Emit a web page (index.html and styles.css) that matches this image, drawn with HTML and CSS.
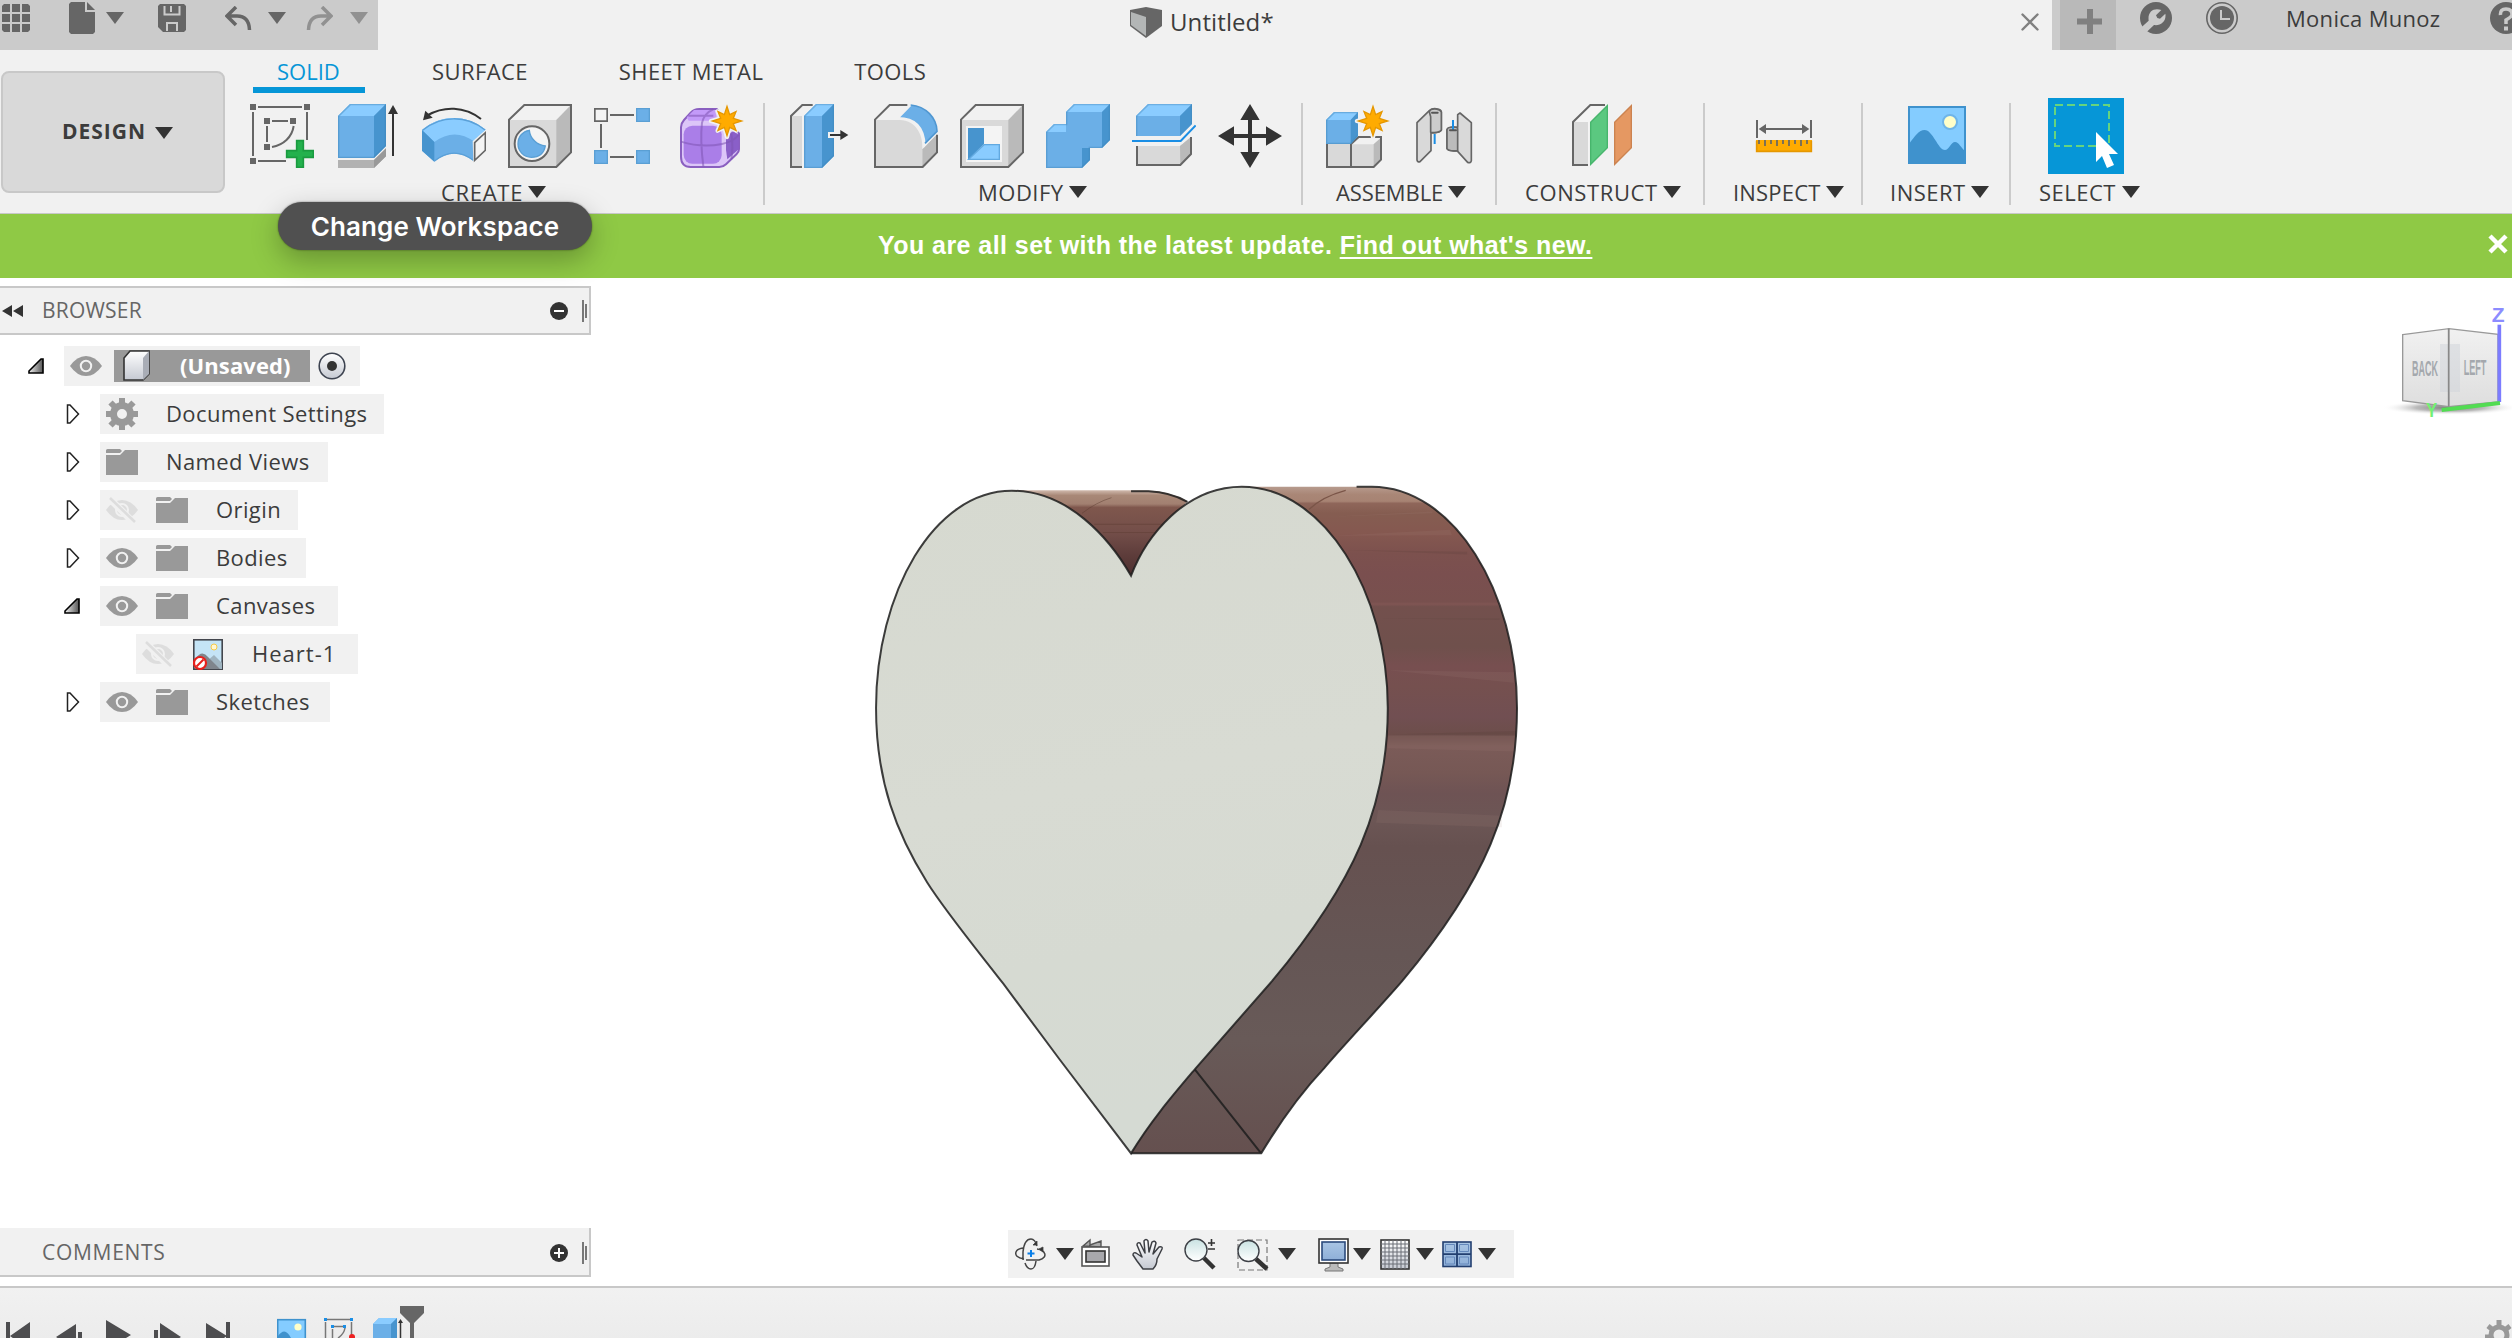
FILE: index.html
```html
<!DOCTYPE html>
<html lang="en">
<head>
<meta charset="utf-8">
<title>Untitled*</title>
<link rel="stylesheet" href="styles.css">
</head>
<body>
<svg class="defs" aria-hidden="true">
  <defs>
    <symbol id="caret" viewBox="0 0 18 12"><path d="M0 0H18L9 12Z" fill="currentColor"/></symbol>
    <symbol id="star" viewBox="-56 -56 112 112">
      <g id="starshape"><path d="M0-48L8-19L28-29L19-8L48 0L19 8L28 29L8 19L0 48L-8 19L-28 29L-19 8L-48 0L-19-8L-28-29L-8-19Z" fill="#ffab00" stroke="#f1f1f1" stroke-width="13" stroke-linejoin="round"/><path d="M0-44L8-19L27-28L19-8L44 0L19 8L27 28L8 19L0 44L-8 19L-27 28L-19 8L-44 0L-19-8L-27-28L-8-19Z" fill="#ffab00" stroke="#e59700" stroke-width="4"/></g>
    </symbol>
    <symbol id="eye" viewBox="0 0 32 20"><path d="M0 10Q7 0 16 0T32 10Q25 20 16 20T0 10Z" fill="#999"/><circle cx="16" cy="10" r="5.2" fill="#999" stroke="#f1f1f1" stroke-width="2"/></symbol>
    <symbol id="eyeoff" viewBox="0 0 32 26"><path d="M0 13Q7 3 16 3T32 13Q25 23 16 23T0 13Z" fill="#ddd"/><circle cx="16" cy="13" r="6" fill="#ddd" stroke="#f1f1f1" stroke-width="2"/><path d="M3 1L28 26" stroke="#f1f1f1" stroke-width="7"/><path d="M4 1L29 25" stroke="#ddd" stroke-width="2.6"/></symbol>
    <symbol id="folder" viewBox="0 0 32 26"><path d="M0 1.500Q0 0 1.500 0H14L16 2L14 4H0ZM0 6H14L19 1H32V26H0Z" fill="#999"/></symbol>
    <symbol id="closed" viewBox="0 0 14 20"><path d="M1.500 1H4L12.500 10L4 19H1.500Z" fill="#fff" stroke="#222" stroke-width="1.500"/></symbol>
    <symbol id="open" viewBox="0 0 16 16"><path d="M1 15V13L13 1H15V15Z" fill="url(#openfill)" stroke="#000" stroke-width="1.600"/></symbol>
    <linearGradient id="openfill"><stop offset="0" stop-color="#eee"/><stop offset="1" stop-color="#555"/></linearGradient>
    <linearGradient id="metal" x2="0" y2="1"><stop offset="0" stop-color="#fff"/><stop offset="1" stop-color="#c5c9d2"/></linearGradient>
    <linearGradient id="lens" x2="0" y2="1"><stop offset="0" stop-color="#c9e2e2"/><stop offset="1" stop-color="#fff"/></linearGradient>
    <linearGradient id="screen" x2="0" y2="1"><stop offset="0" stop-color="#a9c5e4"/><stop offset="1" stop-color="#8eafd8"/></linearGradient>
  </defs>
</svg>
<div class="app">
  <header class="titlebar">
    <div class="quick">
      <svg class="q-grid" viewBox="0 0 28 28" fill="#666"><path d="M2 0H8V8H0V2ZM10 0H18V8H10ZM20 0H26L28 2V8H20ZM0 10H8V18H0ZM10 10H18V18H10ZM20 10H28V18H20ZM0 20H8V28H2L0 26ZM10 20H18V28H10ZM20 20H28V26L26 28H20Z"/></svg>
      <svg class="q-file" viewBox="0 0 26 32" fill="#666"><path d="M2 0H16V10H26V30L24 32H2L0 30V2ZM18 0L26 8H18Z"/></svg>
      <svg class="caret q-c1"><use href="#caret"/></svg>
      <svg class="q-save" viewBox="0 0 28 28"><path d="M2 0H26L28 2V26L26 28H5L0 23V2Z" fill="#666"/><path d="M6.500 2V10.500H21.500V2M9 27V19H19V27" fill="none" stroke="#cbcbcb" stroke-width="2"/><path d="M13 2V8" stroke="#cbcbcb" stroke-width="2"/></svg>
      <svg class="q-undo" viewBox="0 0 27 24" fill="none" stroke="#666" stroke-width="3.500"><path d="M11 1L2 10L11 19M2 10H12Q24 10 24.500 24"/></svg>
      <svg class="caret q-c2"><use href="#caret"/></svg>
      <svg class="q-redo" viewBox="0 0 27 24" fill="none" stroke="#919191" stroke-width="3.500"><path d="M16 1L25 10L16 19M25 10H15Q3 10 2.500 24"/></svg>
      <svg class="caret q-c3"><use href="#caret"/></svg>
    </div>
    <div class="doctab">
      <svg class="doc-icon" viewBox="0 0 32 31"><path d="M0 3L16 0L32 3V19L16 31L0 19Z" fill="#666"/><path d="M1 5L16 10V29L1 18Z" fill="#b3b6b6"/></svg>
      <span class="doc-name">Untitled*</span>
      <svg class="doc-close" viewBox="0 0 18 18"><path d="M1.500 1.500L16.500 16.500M16.500 1.500L1.500 16.500" stroke="#808080" stroke-width="2.400" stroke-linecap="round"/></svg>
    </div>
    <div class="account">
      <div class="newtab"><svg width="25" height="25" viewBox="0 0 25 25"><path d="M0 12.500H25M13 0V25" stroke="#808080" stroke-width="6"/></svg></div>
      <svg class="a-wrench" viewBox="420 6 96 96"><circle cx="468" cy="54" r="48" fill="#666"/><path d="M416 98L426 80L446 62C442 34 462 22 484 30L468 46L472 54L480 56L496 41C500 64 482 78 462 75L440 96L428 112Z" fill="#cbcbcb"/></svg>
      <svg class="a-clock" viewBox="0 0 32 32"><circle cx="16" cy="16" r="15.200" fill="none" stroke="#666" stroke-width="1.600"/><circle cx="16" cy="16" r="12" fill="#666"/><path d="M15 8V17H24" fill="none" stroke="#cbcbcb" stroke-width="2"/></svg>
      <span class="user">Monica Munoz</span>
      <svg class="a-help" viewBox="0 0 32 32"><circle cx="16" cy="16" r="16" fill="#666"/><path d="M10.500 13Q10 7 16 7T22 12.500Q21.500 15 16 18V22" fill="none" stroke="#cbcbcb" stroke-width="3.500"/><path d="M14 24.500H18V28.500H14Z" fill="#cbcbcb"/></svg>
    </div>
  </header>

  <section class="ribbon">
    <button class="workspace">DESIGN<svg class="caret"><use href="#caret"/></svg></button>
    <div class="tools">
      <nav class="tabs">
        <a class="tab active">SOLID</a><a class="tab">SURFACE</a><a class="tab">SHEET METAL</a><a class="tab">TOOLS</a>
      </nav>
      <div class="groups">
        <div class="group g-create">
          <div class="icons">
            <svg viewBox="30 42 192 192"><path d="M54 51H186M39 66V198M54 213H138M201 66V150M96 93H144M81 108V156M96 171C130 165 156 142 161 108" fill="none" stroke="#666" stroke-width="6"/><path d="M30 42h18v18H30zM192 42h18v18h-18zM72 84h18v18H72zM150 84h18v18h-18zM72 162h18v18H72zM30 204h18v18H30z" fill="#666"/><path d="M170 152H190V182H220V202H190V232H170V202H140V182H170Z" fill="#23b14d" stroke="#1a9b40" stroke-width="5"/></svg>
            <svg viewBox="288 42 192 192"><path d="M294 210H402L438 175V199L402 234H294Z" fill="#b2b2b2"/><path d="M402 210L438 175V199L402 234Z" fill="#999"/><path d="M294 78L330 42H438V168L402 204H294Z" fill="#6bafe7"/><path d="M294 78L330 42H438L402 78Z" fill="#8accff"/><path d="M402 78L438 42V168L402 204Z" fill="#4794ce"/><path d="M296 79L331 44H436V167L401 202H296Z" fill="none" stroke="#3f84b9" stroke-opacity=".45" stroke-width="4"/><path d="M459 60V198" stroke="#333" stroke-width="6"/><path d="M459 45L474 72H444Z" fill="#333"/></svg>
            <svg viewBox="546 42 192 192"><path d="M546 120C602 72 680 72 738 120L702 156V214C662 184 622 184 583 215L546 182Z" fill="#6bafe7"/><path d="M546 120C602 72 680 72 738 120L702 154C664 126 622 126 583 156Z" fill="#8accff"/><path d="M546 120L583 156V215L546 182Z" fill="#4794ce"/><path d="M548 121C602 75 680 75 735 120M583 213C622 182 662 182 700 211" fill="none" stroke="#5aa0d8" stroke-width="4"/><path d="M698 154L740 117V184L700 217Z" fill="#f1f1f1"/><path d="M704 158L736 128V181L704 211Z" fill="#f4f4f4" stroke="#666" stroke-width="5"/><path d="M562 76C612 48 672 48 723 87" fill="none" stroke="#333" stroke-width="6"/><path d="M549 91L556 62L578 83Z" fill="#333"/></svg>
            <svg viewBox="804 42 192 192"><path d="M807 89L853 45H993V187L949 231H807Z" fill="#d9d9d9"/><path d="M807 89L853 45H993L949 90H807Z" fill="#f1f1f1"/><path d="M949 90L993 45V187L949 231Z" fill="#bababa"/><path d="M807 89L853 45H993V187L949 231H807Z" fill="none" stroke="#666" stroke-width="6"/><circle cx="876" cy="161" r="52" fill="#f4f4f4" stroke="#666" stroke-width="6"/><path d="M868 121C870 146 892 166 916 168C912 190 896 202 874 202C850 202 834 182 834 162C834 140 848 124 868 121Z" fill="#6bafe7" stroke="#5a9fd4" stroke-width="4"/></svg>
            <svg viewBox="1062 42 192 192"><path d="M1110 75H1182M1083 102V174M1110 201H1182" stroke="#666" stroke-width="6"/><path d="M1064.500 56.500h37v37h-37z" fill="#f4f4f4" stroke="#666" stroke-width="5"/><path d="M1190 56h38v38h-38zM1064 182h38v38h-38zM1190 182h38v38h-38z" fill="#6bafe7" stroke="#5a9fd4" stroke-width="4"/></svg>
            <svg viewBox="1320 42 192 192"><path d="M1323 112Q1323 100 1332 90L1352 68Q1362 57 1378 57H1430L1497 130V178Q1497 186 1490 192L1458 223Q1450 231 1438 231H1352Q1323 230 1323 200Z" fill="#dcc6f8" stroke="#8a5fc0" stroke-width="6"/><path d="M1340 82L1362 60H1425L1432 92H1346Z" fill="#c39af9"/><rect x="1331" y="107" width="114" height="114" rx="26" fill="#aa7ee8"/><path d="M1458 150Q1460 132 1480 124L1496 134V178L1462 208Q1456 180 1458 150Z" fill="#8a5fc8"/><path d="M1323 155Q1385 174 1446 162Q1480 155 1496 135M1390 229Q1380 150 1386 98Q1394 68 1420 58M1345 77H1420M1474 208Q1480 170 1474 130" fill="none" stroke="#7d54b3" stroke-opacity=".55" stroke-width="6"/><use href="#starshape" transform="translate(1461 93)"/></svg>
          </div>
          <div class="label">CREATE<svg class="caret"><use href="#caret"/></svg></div>
        </div>
        <div class="group g-modify">
          <div class="icons">
            <svg viewBox="54 42 192 192"><path d="M63 78L97 45H132L100 80V231H63Z" fill="#f1f1f1"/><path d="M66 78H96V228H66Z" fill="#d9d9d9"/><path d="M128 45H97L63 78V231H96" fill="none" stroke="#666" stroke-width="6"/><path d="M102 78L138 42H192V198L156 234H102Z" fill="#6bafe7"/><path d="M102 78L138 42H192L156 78Z" fill="#8accff"/><path d="M156 78L192 42V198L156 234Z" fill="#4794ce"/><path d="M104 79L139 44H190V197L155 232H104Z" fill="none" stroke="#3f84b9" stroke-opacity=".4" stroke-width="4"/><path d="M174 126H206V144H174Z" fill="#f1f1f1"/><path d="M180 132H211V120L235 135L211 150V138H180Z" fill="#333"/></svg>
            <svg viewBox="312 42 192 192"><path d="M315 89L359 45H420L500 130V187L458 231H315Z" fill="#f1f1f1"/><path d="M315 90H390C435 92 460 130 457 178V231H315Z" fill="#d9d9d9"/><path d="M457 178L501 133V187L457 231Z" fill="#bababa"/><path d="M412 45H359L315 89V231H458L501 187V134" fill="none" stroke="#666" stroke-width="6"/><path d="M384 84L424 43C470 47 502 84 503 124L464 166C462 116 438 84 384 84Z" fill="#6bafe7" stroke="#f1f1f1" stroke-width="6"/><path d="M422 45C468 49 500 84 501 124L465 160" fill="none" stroke="#4f97d2" stroke-width="5"/></svg>
            <svg viewBox="570 42 192 192"><path d="M573 89L617 45H759V187L715 231H573Z" fill="#d9d9d9"/><path d="M573 89L617 45H759L715 90H573Z" fill="#f1f1f1"/><path d="M715 90L759 45V187L715 231Z" fill="#bababa"/><path d="M573 89L617 45H759V187L715 231H573Z" fill="none" stroke="#666" stroke-width="6"/><path d="M588 108H696V216H588Z" fill="#f4f4f4"/><path d="M594 114H642V162L594 210Z" fill="#4794ce"/><path d="M596 208L642 164H688V208Z" fill="#8accff" stroke="#62a9e0" stroke-width="4"/></svg>
            <svg viewBox="828 42 192 192"><path d="M888 66L912 42H1020V150L996 174H960V210L936 234H828V126L852 102H888Z" fill="#6bafe7"/><path d="M888 66L912 42H1020L996 66ZM828 126L852 102H888V126Z" fill="#8accff"/><path d="M996 66L1020 42V150L996 174ZM936 174H960V210L936 234Z" fill="#4794ce"/><path d="M890 67L913 44H1018V149L995 172H958V209L935 232H830V127L853 104H890Z" fill="none" stroke="#3f84b9" stroke-opacity=".4" stroke-width="4"/></svg>
            <svg viewBox="1086 42 192 192"><path d="M1101 168H1230L1263 141V192L1231 225H1101Z" fill="#d9d9d9"/><path d="M1230 168L1263 141V192L1231 225Z" fill="#bababa"/><path d="M1101 168V225H1231L1263 192V141" fill="none" stroke="#666" stroke-width="6"/><path d="M1098 78L1134 42H1266V102L1230 138H1098Z" fill="#6bafe7"/><path d="M1098 78L1134 42H1266L1230 78Z" fill="#8accff"/><path d="M1230 78L1266 42V102L1230 138Z" fill="#4794ce"/><path d="M1100 138V79L1135 44H1264V102" fill="none" stroke="#3f84b9" stroke-opacity=".4" stroke-width="4"/><path d="M1086 153H1232L1277 106" fill="none" stroke="#f1f1f1" stroke-width="18"/><path d="M1086 153H1232L1277 106" fill="none" stroke="#1a8ee5" stroke-width="6"/></svg>
            <svg viewBox="1344 42 192 192"><path d="M1440 42L1469 90H1446V132H1488V109L1536 138L1488 167V144H1446V186H1469L1440 234L1411 186H1434V144H1392V167L1344 138L1392 109V132H1434V90H1411Z" fill="#333"/></svg>
          </div>
          <div class="label">MODIFY<svg class="caret"><use href="#caret"/></svg></div>
        </div>
        <div class="group g-assemble">
          <div class="icons">
            <svg viewBox="78 42 192 192"><path d="M81 160H153L178 141H243V209L221 231H81Z" fill="#d9d9d9"/><path d="M156 163L178 143H243L221 163Z" fill="#f1f1f1"/><path d="M221 163L243 143V209L221 231Z" fill="#bababa"/><path d="M81 160V231H221L243 209V141H176L153 162V231" fill="none" stroke="#666" stroke-width="6"/><path d="M78 90L102 66H174V138L152 162H78Z" fill="#6bafe7"/><path d="M78 90L102 66H174L152 90Z" fill="#8accff"/><path d="M152 90L174 66V138L152 162Z" fill="#4794ce"/><path d="M80 91L103 68H172M80 90V160H152L172 138" fill="none" stroke="#3f84b9" stroke-opacity=".45" stroke-width="4"/><use href="#starshape" transform="translate(219 93)"/></svg>
            <svg viewBox="336 42 192 192"><g stroke="#666" stroke-width="5" stroke-linejoin="round"><path d="M351 98L388 62Q394 56 404 56Q424 57 424 66V120Q420 129 393 129V182L360 215Q353 218 351 210Z" fill="#d9d9d9"/><path d="M388 66Q390 57 404 57T424 66V120Q418 130 392 127V80Z" fill="#ccc"/><path d="M514 98L480 69L473 74V112Q450 108 441 120V176Q446 184 471 182L503 217Q513 220 514 212Z" fill="#d9d9d9"/><path d="M441 118Q444 111 458 111T473 116V182Q446 185 441 176Z" fill="#bbb"/></g><path d="M404 132V162M459 90V122" stroke="#1a8ee5" stroke-width="6"/><path d="M396 68H413M450 121H468" stroke="#555" stroke-width="6" stroke-linecap="round"/></svg>
          </div>
          <div class="label">ASSEMBLE<svg class="caret"><use href="#caret"/></svg></div>
        </div>
        <div class="group g-construct">
          <div class="icons">
            <svg viewBox="810 42 192 192"><path d="M819 96L871 45H915L868 96V225H819Z" fill="#f4f4f4"/><path d="M822 96H864V222H822Z" fill="#d9d9d9"/><path d="M915 45H871L819 96V225H864" fill="none" stroke="#666" stroke-width="6"/><path d="M872 97L922 47V173L872 223Z" fill="#5bc880" stroke="#47b56c" stroke-width="4"/><path d="M944 97L994 47V173L944 223Z" fill="#e59862" stroke="#cc8350" stroke-width="4"/></svg>
          </div>
          <div class="label">CONSTRUCT<svg class="caret"><use href="#caret"/></svg></div>
        </div>
        <div class="group g-inspect">
          <div class="icons">
            <svg viewBox="1356 42 192 192"><path d="M1371 90V144M1533 90V144M1390 117H1514" stroke="#666" stroke-width="6"/><path d="M1376 117L1398 102V132ZM1528 117L1506 102V132Z" fill="#666"/><path d="M1368 150H1536V186H1368Z" fill="#ffab00"/><path d="M1370 152V184H1534V152" fill="none" stroke="#e59700" stroke-width="5"/><path d="M1377 150v12M1395 150v18M1413 150v12M1431 150v18M1449 150v12M1467 150v18M1485 150v12M1503 150v18M1521 150v12" stroke="#666" stroke-width="5"/></svg>
          </div>
          <div class="label">INSPECT<svg class="caret"><use href="#caret"/></svg></div>
        </div>
        <div class="group g-insert">
          <div class="icons">
            <svg viewBox="0 0 64 64"><rect x="3" y="2" width="58" height="58" fill="#84ccff"/><path d="M4 40C10 32 14 26 19.500 26C28 26 33 46 40 46C44 46 46 38 50 38C54 38 56 44 60 47V60H4Z" fill="#3f92cd"/><path d="M4 3H60V59H4Z" fill="none" stroke="#3f92cd" stroke-width="2"/><circle cx="45" cy="18" r="7" fill="#ffffc9" stroke="#6fb5e8" stroke-width="2"/></svg>
          </div>
          <div class="label">INSERT<svg class="caret"><use href="#caret"/></svg></div>
        </div>
        <div class="group g-select">
          <div class="icons">
            <svg class="selected" viewBox="0 0 76 76"><rect x="7" y="7" width="54" height="41" fill="none" stroke="#66d47e" stroke-width="2" stroke-dasharray="8 4"/><path d="M48 34L70 56H61L66 67L59 70L54 58L48 64Z" fill="#fff"/></svg>
          </div>
          <div class="label">SELECT<svg class="caret"><use href="#caret"/></svg></div>
        </div>
      </div>
    </div>
    <div class="tooltip">Change Workspace</div>
  </section>

  <div class="banner">
    <p>You are all set with the latest update. <a>Find out what's new.</a></p>
    <svg class="banner-close" viewBox="0 0 20 20"><path d="M2 2L18 18M18 2L2 18" stroke="#fff" stroke-width="4.500"/></svg>
  </div>

  <main class="viewport">
    <svg class="scene" viewBox="0 0 2512 1008">
      <defs>
        <linearGradient id="side" gradientUnits="userSpaceOnUse" x1="0" y1="58" x2="0" y2="1510">
          <stop offset="0" stop-color="#b79b8e"/><stop offset=".012" stop-color="#a98676"/><stop offset=".022" stop-color="#a78373"/><stop offset=".025" stop-color="#8f665a"/><stop offset=".04" stop-color="#855d51"/><stop offset=".07" stop-color="#855850"/><stop offset=".1" stop-color="#7c514e"/><stop offset=".13" stop-color="#7a4f4f"/><stop offset=".173" stop-color="#78504e"/><stop offset=".176" stop-color="#805553"/><stop offset=".18" stop-color="#73504d"/><stop offset=".24" stop-color="#6f504c"/><stop offset=".27" stop-color="#774f50"/><stop offset=".3" stop-color="#75504f"/><stop offset=".345" stop-color="#714f52"/><stop offset=".37" stop-color="#6d4e4b"/><stop offset=".39" stop-color="#7b5b58"/><stop offset=".43" stop-color="#765855"/><stop offset=".46" stop-color="#6e5354"/><stop offset=".5" stop-color="#6c5655"/><stop offset=".54" stop-color="#665150"/><stop offset=".7" stop-color="#655655"/><stop offset=".83" stop-color="#685a58"/><stop offset="1" stop-color="#65504f"/>
        </linearGradient>
        <linearGradient id="dip" gradientUnits="userSpaceOnUse" x1="0" y1="66" x2="0" y2="252">
          <stop offset="0" stop-color="#d0b9ad"/><stop offset=".06" stop-color="#a88877"/><stop offset=".16" stop-color="#a28071"/><stop offset=".2" stop-color="#7f574d"/><stop offset=".5" stop-color="#734e49"/><stop offset=".75" stop-color="#5e3d3b"/><stop offset="1" stop-color="#4d2f2f"/>
        </linearGradient>
        <linearGradient id="face" x2=".15" y2="1"><stop offset="0" stop-color="#d6d9d0"/><stop offset=".5" stop-color="#d8dbd3"/><stop offset=".75" stop-color="#d6dad2"/><stop offset="1" stop-color="#d5dad3"/></linearGradient>
        <linearGradient id="cube" x2="0" y2="1"><stop offset="0" stop-color="#f1f1f1"/><stop offset="1" stop-color="#dedede"/></linearGradient>
        <radialGradient id="shadow"><stop offset="0" stop-color="#777"/><stop offset=".5" stop-color="#aaa" stop-opacity=".8"/><stop offset="1" stop-color="#fff" stop-opacity="0"/></radialGradient>
      </defs>
      <svg class="heart" x="860" y="182" width="680" height="720" viewBox="0 0 1568 1568" preserveAspectRatio="none">
        <path d="M350 66H660Q716 68 755 90L700 150L625 255Z" fill="url(#dip)"/>
        <path class="edge" d="M625 68H665Q716 70 755 91"/>
        <path d="M512 116Q545 92 580 82M540 140H720M560 158H700" fill="none" stroke="#5a3a30" stroke-opacity=".5" stroke-width="2"/>
        <path d="M880 58H1180C1370 58 1515 290 1515 540C1515 755 1440 920 1250 1135C1200 1190 1110 1280 1070 1325C1015 1380 970 1440 925 1510H625L680 1327L1150 545Z" fill="url(#side)"/>
        <path d="M1070 124L1320 112V116ZM1090 165L1360 152L1365 164ZM1217 458L1508 462V485ZM1217 600H1512V635L1217 628ZM1195 762L1480 775V800L1190 790Z" fill="#b08a80" fill-opacity=".12"/>
        <path d="M1120 196L1400 200V206ZM1200 345H1475V348ZM1217 598L1512 590V600Z" fill="#493430" fill-opacity=".15"/>
        <path d="M1035 108Q1065 80 1120 66" fill="none" stroke="#7a5548" stroke-width="3"/>
        <path class="edge" d="M1145 58H1180C1370 58 1515 290 1515 540C1515 755 1440 920 1250 1135C1200 1190 1110 1280 1070 1325C1015 1380 970 1440 925 1510H625M772 1327L925 1510"/>
        <path class="edge face" d="M625 252C575 170 480 67 350 67C170 67 37 290 37 540C37 700 85 815 155 920C195 980 260 1055 330 1140L460 1305L625 1510C670 1440 720 1385 772 1327C830 1265 890 1200 950 1135C1140 920 1217 755 1217 540C1217 290 1070 58 880 58C750 58 660 165 625 252Z"/>
      </svg>
      <svg x="2340" y="2" width="172" height="160" viewBox="0 0 516 480">
        <ellipse cx="330" cy="383" rx="205" ry="22" fill="url(#shadow)"/>
        <path d="M188 164L326 146V380L188 362Z" fill="url(#cube)" stroke="#999" stroke-width="4"/>
        <path d="M326 146L474 163V366L326 380Z" fill="url(#cube)" stroke="#999" stroke-width="4"/>
        <path d="M300 192H360V336H300Z" fill="#cfd3d9" fill-opacity=".5"/>
        <path d="M326 146V380" stroke="#888" stroke-width="5"/>
        <path d="M478 134V366" stroke="#7c7cff" stroke-width="11"/>
        <path d="M305 390L480 369" stroke="#52dc52" stroke-width="12"/>
        <text class="cube-text" transform="translate(216 287) scale(.415 1)">BACK</text>
        <text class="cube-text" transform="translate(371 286) scale(.42 1)">LEFT</text>
        <text class="axis" x="455" y="126" fill="#8c8cff">Z</text>
        <text class="axis" transform="translate(258 412) scale(.8 1)" fill="#72f072">Y</text>
      </svg>
    </svg>

    <aside class="side">
      <div class="panel">
        <svg class="collapse" viewBox="0 0 21 12"><path d="M0 6L10 0V12ZM11 6L21 0V12Z" fill="#333"/></svg>
        <span class="panel-title">BROWSER</span>
        <svg class="toggle" viewBox="0 0 18 18"><circle cx="9" cy="9" r="9" fill="#333"/><path d="M4 9H14" stroke="#fff" stroke-width="2"/></svg>
        <i class="grip"></i>
      </div>
      <ul class="tree">
        <li class="root"><svg class="tw-open"><use href="#open"/></svg><div class="node"><svg class="eye"><use href="#eye"/></svg>
          <div class="unsaved"><svg width="27" height="32" viewBox="0 0 27 32"><path d="M1 8L7 1H26V24L20 30H1Z" fill="url(#metal)" stroke="#333" stroke-width="1.600"/><path d="M20 30V8L26 1V24Z" fill="#a9adb6"/></svg><b>(Unsaved)</b></div>
          <svg class="radio" viewBox="0 0 28 28"><circle cx="14" cy="14" r="12.800" fill="url(#metal)" stroke="#3d4350" stroke-width="1.600"/><circle cx="14" cy="14" r="5" fill="#333"/></svg></div></li>
        <li><svg class="tw"><use href="#closed"/></svg><div class="node w284"><svg class="gear" viewBox="-16 -16 32 32"><circle r="8.500" fill="none" stroke="#999" stroke-width="7"/><path d="M0-16V-8M0 8V16M-16 0H-8M8 0H16M-11.500-11.500L-7-7M7 7L11.500 11.500M-11.500 11.500L-7 7M7-7L11.500-11.500" stroke="#999" stroke-width="6"/></svg><span>Document Settings</span></div></li>
        <li><svg class="tw"><use href="#closed"/></svg><div class="node w228"><svg class="folder"><use href="#folder"/></svg><span>Named Views</span></div></li>
        <li><svg class="tw"><use href="#closed"/></svg><div class="node w198"><svg class="eyeoff"><use href="#eyeoff"/></svg><svg class="folder"><use href="#folder"/></svg><span>Origin</span></div></li>
        <li><svg class="tw"><use href="#closed"/></svg><div class="node w206"><svg class="eye"><use href="#eye"/></svg><svg class="folder"><use href="#folder"/></svg><span>Bodies</span></div></li>
        <li><svg class="tw-open"><use href="#open"/></svg><div class="node w238"><svg class="eye"><use href="#eye"/></svg><svg class="folder"><use href="#folder"/></svg><span>Canvases</span></div></li>
        <li class="leaf"><div class="node w222"><svg class="eyeoff"><use href="#eyeoff"/></svg>
          <svg class="thumb" viewBox="0 0 30 31"><rect x=".8" y=".8" width="28.400" height="29.400" fill="#c4e4f6" stroke="#43464d" stroke-width="1.600"/><circle cx="21" cy="8" r="3" fill="#fff6d0" stroke="#f5c94a"/><path d="M14 22L21 16L29 24V30H14Z" fill="#9fb4c0"/><path d="M2 20Q9 10 15 18L27 30H2Z" fill="#7f858c"/><circle cx="7" cy="24" r="6" fill="#fff" stroke="#e8201c" stroke-width="2.200"/><path d="M3.500 27.500L10.500 20.500" stroke="#e8201c" stroke-width="2"/></svg><span class="wide">Heart-1</span></div></li>
        <li><svg class="tw"><use href="#closed"/></svg><div class="node w230"><svg class="eye"><use href="#eye"/></svg><svg class="folder"><use href="#folder"/></svg><span>Sketches</span></div></li>
      </ul>
      <div class="panel comments">
        <span class="panel-title">COMMENTS</span>
        <svg class="toggle" viewBox="0 0 18 18"><circle cx="9" cy="9" r="9" fill="#333"/><path d="M4 9H14M9 4V14" stroke="#fff" stroke-width="2"/></svg>
        <i class="grip"></i>
      </div>
    </aside>

    <div class="navbar">
      <svg class="n-orbit" viewBox="0 0 32 34" fill="none" stroke="#444" stroke-width="1.500"><path d="M9 21C2 20 0 17 1 14Q2 11 8 10M8 22V14C9 4 12 1 16 1Q20 1 22 8M11 22H24C34 19 30 12 22 11M10 25Q12 31 16 31T21 23"/><path d="M16 12V19M12.500 15.500H19.500" stroke="#0a7fe8" stroke-width="2"/><path d="M18 7H22V3ZM28 9L24 11L28 14Z" fill="#333" stroke-width=".8"/></svg>
      <svg class="caret"><use href="#caret"/></svg>
      <svg class="n-cam" viewBox="0 0 30 32"><path d="M2 8L9 2V7L20 3V9Z" fill="#aaa" stroke="#555" stroke-width="1.400"/><rect x="1" y="9" width="27" height="19" fill="#fff" stroke="#555" stroke-width="1.600"/><rect x="5" y="13" width="19" height="11" fill="#a8a8ac" stroke="#333" stroke-width="1.600"/></svg>
      <svg class="n-hand" viewBox="0 0 32 34"><path d="M11 31L5 23L1 17Q1 14 4 15L10 19L5 7Q5 4 8 5L13 15L12 3Q14 0 16 3L17 14L20 4Q23 2 24 5L21 16L27 9Q31 8 30 11L25 21Q25 27 21 31Z" fill="url(#metal)" stroke="#3d3f44" stroke-width="1.500" stroke-linejoin="round"/></svg>
      <svg class="n-zoom" viewBox="0 0 32 34"><path d="M20 20L30 30" stroke="#333" stroke-width="4.500"/><circle cx="12" cy="12" r="11" fill="url(#lens)" stroke="#3d4046" stroke-width="1.400"/><path d="M24 5H31M27.500 1V8M24 11H31" stroke="#333" stroke-width="1.600"/></svg>
      <svg class="n-win" viewBox="0 0 32 34"><rect x="1" y="2" width="29" height="30" fill="none" stroke="#777" stroke-width="1.200" stroke-dasharray="6 3"/><path d="M19 21L30 31" stroke="#333" stroke-width="4.500"/><circle cx="11.500" cy="13" r="10.500" fill="url(#lens)" stroke="#3d4046" stroke-width="1.400"/></svg>
      <svg class="caret"><use href="#caret"/></svg>
      <svg class="n-mon" viewBox="0 0 32 34"><path d="M12 25H20V29L25 31V33H7V31L12 29Z" fill="#bbb" stroke="#777"/><rect x="1" y="1" width="29" height="24" fill="#fff" stroke="#333" stroke-width="1.600"/><rect x="4" y="4" width="23" height="18" fill="url(#screen)" stroke="#2b4a7c" stroke-width="1.600"/></svg>
      <svg class="caret"><use href="#caret"/></svg>
      <svg class="n-grid" viewBox="0 0 30 34"><rect x="1" y="2" width="28" height="29" fill="url(#metal)" stroke="#333" stroke-width="1.600"/><path d="M5 2V31M9 2V31M13 2V31M17 2V31M21 2V31M25 2V31M1 6H29M1 10H29M1 14H29M1 18H29M1 22H29M1 26H29" stroke="#6a6e76" stroke-width="1"/></svg>
      <svg class="caret"><use href="#caret"/></svg>
      <svg class="n-quad" viewBox="0 0 30 34"><rect x="1" y="4" width="28" height="24.500" fill="url(#screen)" stroke="#223f70" stroke-width="1.600"/><path d="M15 4V28.500M1 16.200H29" stroke="#223f70" stroke-width="1.800"/><path d="M3.500 6.500H12.500V13.500H3.500ZM17.500 6.500H26.500V13.500H17.500ZM3.500 19H12.500V26H3.500ZM17.500 19H26.500V26H17.500Z" fill="none" stroke="#6488bb" stroke-width="1"/></svg>
      <svg class="caret"><use href="#caret"/></svg>
    </div>
  </main>

  <footer class="timeline">
    <svg width="230" height="50" viewBox="0 0 230 50" fill="#4d4d4f"><path d="M6 34H10V60H6ZM10 48L30 34V62ZM56 49L76 36V62ZM78 44H82V60H78ZM106 32L131 47L106 62ZM154 42H158V60H154ZM160 35L181 49L160 62ZM206 35L227 48L206 62ZM226 34H230V60H226Z"/></svg>
    <svg class="t-hist" width="150" height="50" viewBox="277 0 150 50"><rect x="277.700" y="31.700" width="27.600" height="28" fill="#84ccff" stroke="#3f92cd" stroke-width="1.600"/><path d="M278 48Q285 38 291 50H278Z" fill="#3f92cd"/><circle cx="298" cy="39" r="3.600" fill="#ffffc9"/><path d="M327 31.500H350M325.500 34V50M351.500 34V48M334 38.500H343M332.500 41V50M345 40Q344 46 338 50" fill="none" stroke="#777" stroke-width="1.500"/><path d="M324 30h3v3h-3zM350 30h3v3h-3zM331 37h3v3h-3zM343 37h3v3h-3z" fill="#1a8ee5"/><circle cx="352" cy="49" r="3" fill="#e22"/><path d="M373 36L379 30H397V60H373Z" fill="#6bafe7"/><path d="M373 36L379 30H397L391 36Z" fill="#8accff"/><path d="M391 36L397 30V60H391Z" fill="#4794ce"/><path d="M400.500 33V50" stroke="#333" stroke-width="1.500"/><path d="M400.500 31L403 35H398Z" fill="#333"/><path d="M400 18H424V25L414 35V50H410V35L400 25Z" fill="#666"/></svg>
    <svg class="t-gear" width="28" height="50" viewBox="0 0 28 50"><circle cx="15" cy="47" r="8" fill="none" stroke="#999" stroke-width="5"/><path d="M15 32V40M4 38L9 42M26 38L21 42M1 49H7" stroke="#999" stroke-width="5"/></svg>
  </footer>
</div>
</body>
</html>
```

FILE: styles.css
```css
* { box-sizing: border-box; }
body { margin: 0; font-family: "Open Sans", "Noto Sans", sans-serif; font-size: 22px; color: #3c3c3c; background: #fff; overflow: hidden; }
svg { display: block; flex: none; }
.defs { position: absolute; width: 0; height: 0; }
.app { display: flex; flex-direction: column; width: 2512px; height: 1338px; overflow: hidden; }
.caret { width: 18px; height: 12px; color: #333; }

/* Title bar */
.titlebar { display: flex; height: 50px; flex: none; background: #f1f1f1; }
.quick { display: flex; align-items: flex-start; width: 378px; background: #cbcbcb; }
.quick .caret { margin-top: 12px; color: #666; }
.q-grid { width: 28px; height: 28px; margin: 4px 0 0 2px; }
.q-file { width: 26px; height: 32px; margin: 2px 0 0 39px; }
.quick .q-c1 { margin-left: 11px; }
.q-save { width: 28px; height: 28px; margin: 4px 0 0 34px; }
.q-undo { width: 27px; height: 24px; margin: 6px 0 0 39px; }
.quick .q-c2 { margin-left: 16px; }
.q-redo { width: 27px; height: 24px; margin: 6px 0 0 20px; }
.quick .q-c3 { margin-left: 17px; color: #919191; }
.doctab { display: flex; flex: 1; padding-left: 752px; }
.doc-icon { width: 32px; height: 31px; margin-top: 7px; }
.doc-name { flex: 1; padding-left: 8px; font-size: 24px; line-height: 44px; letter-spacing: .1px; }
.doc-close { width: 18px; height: 18px; margin: 13px 13px 0 0; }
.account { display: flex; flex: none; width: 460px; padding-left: 8px; background: #cbcbcb; overflow: hidden; }
.newtab { flex: none; width: 56px; height: 50px; padding: 9px 0 0 17px; background: #b9b9b9; }
.a-wrench { width: 32px; height: 32px; margin: 2px 0 0 24px; }
.a-clock { width: 32px; height: 32px; margin: 2px 0 0 34px; }
.user { flex: none; width: 252px; padding-left: 48px; line-height: 36px; letter-spacing: .3px; white-space: nowrap; }
.a-help { width: 32px; height: 32px; margin-top: 2px; }

/* Ribbon */
.ribbon { position: relative; display: flex; height: 164px; flex: none; background: #f1f1f1; border-bottom: 1px solid #c8c8c8; }
.workspace { display: flex; align-items: center; gap: 9px; width: 224px; height: 122px; margin: 21px 0 0 1px; padding: 0 0 2px 59px; border: 2px solid #c8c8c8; border-radius: 8px; background: #d9d9d9; color: #3c3c3c; font: 700 21px "Open Sans", sans-serif; letter-spacing: 1px; }
.workspace .caret { margin-top: 4px; }
.tools { flex: 1; }
.tabs { display: flex; gap: 43px; height: 43px; padding-left: 28px; }
.tab { height: 43px; padding: 6px 24px 1px; line-height: 30px; letter-spacing: .4px; border-bottom: 6px solid transparent; white-space: nowrap; }
.tab.active { width: 112px; letter-spacing: 0; color: #0696d7; border-color: #0696d7; }
.groups { display: flex; padding: 10px 0 0 15px; }
.group { height: 102px; padding-top: 1px; border-right: 2px solid #cbcbcb; }
.icons { display: flex; gap: 22px; height: 64px; }
.icons svg { width: 64px; height: 64px; }
.label { display: flex; gap: 5px; height: 24px; margin-top: 12px; line-height: 24px; letter-spacing: .5px; }
.label .caret { margin-top: 6px; }
.g-create { width: 525px; }
.g-create .icons { padding-left: 10px; }
.g-create .label { padding-left: 201px; letter-spacing: .7px; }
.g-modify { width: 538px; }
.g-modify .icons { padding-left: 23px; }
.g-modify .label { padding-left: 213px; }
.g-assemble { width: 194px; }
.g-assemble .icons { padding-left: 23px; }
.g-assemble .label { padding-left: 33px; letter-spacing: -.1px; }
.g-construct { width: 208px; }
.g-construct .icons { padding-left: 73px; }
.g-construct .label { padding-left: 28px; letter-spacing: .6px; }
.g-inspect { width: 158px; }
.g-inspect .icons { padding-left: 47px; }
.g-inspect .label { padding-left: 28px; letter-spacing: .2px; }
.g-insert { width: 148px; }
.g-insert .icons { padding-left: 42px; }
.g-insert .label { padding-left: 27px; }
.g-select { border: 0; }
.g-select .icons { padding-left: 37px; }
.g-select .label { padding-left: 28px; gap: 6px; }
.icons .selected { width: 76px; height: 76px; margin-top: -6px; background: #0696d7; }
.tooltip { position: absolute; z-index: 3; left: 278px; top: 152px; width: 314px; height: 48px; border-radius: 24px; background: #505050; color: #fff; font: 600 26px/49px Inter, sans-serif; letter-spacing: .1px; text-align: center; white-space: nowrap; box-shadow: 0 10px 28px rgba(0,0,0,.27), 0 0 2px rgba(0,0,0,.5); }

/* Update banner */
.banner { display: flex; height: 64px; flex: none; background: #8fc945; color: #fff; }
.banner p { flex: 1; margin: 0; padding-left: 878px; font: 700 25px/62px "Liberation Sans", Arial, sans-serif; letter-spacing: .44px; white-space: nowrap; }
.banner a { text-decoration: underline; text-decoration-thickness: 2px; text-underline-offset: 3px; }
.banner-close { width: 20px; height: 20px; margin: 20px 4px 0 0; }

/* Viewport */
.viewport { position: relative; height: 1008px; flex: none; display: flex; align-items: flex-end; }
.scene { position: absolute; inset: 0; width: 2512px; height: 1008px; }
.edge { fill: none; stroke: #1d1d1d; stroke-width: 2; vector-effect: non-scaling-stroke; stroke-opacity: .85; }
.face { fill: url(#face); }
.cube-text { font: 700 65px "Liberation Sans", sans-serif; fill: #a4a8ad; }
.axis { font: 700 63px "Liberation Sans", sans-serif; }
.side { position: relative; display: flex; flex-direction: column; width: 591px; height: 1008px; padding: 8px 0 9px; }
.panel { display: flex; align-items: center; height: 49px; flex: none; padding: 0 2px 1px 2px; background: #f1f1f1; border: 2px solid #c8c8c8; border-left: 0; color: #666; font-size: 21px; }
.collapse { width: 21px; height: 12px; margin-top: 2px; }
.panel-title { flex: 1; padding-left: 19px; letter-spacing: .2px; line-height: 40px; }
.toggle { width: 18px; height: 18px; margin: 1px 14px 0 0; }
.grip { width: 5px; height: 22px; margin-top: 1px; border-left: 2px solid #777; background: linear-gradient(#777, #777) right center / 2px 14px no-repeat; }
.comments { margin-top: auto; padding-top: 2px; border-top: 0; }
.comments .panel-title { padding-left: 40px; letter-spacing: .7px; }
.tree { margin: 11px 0 0; padding: 0; list-style: none; display: grid; gap: 8px; letter-spacing: .4px; }
.tree li { display: flex; align-items: center; height: 40px; padding-left: 66px; }
.tree .root { padding-left: 28px; }
.tree .leaf { padding-left: 136px; }
.tw { width: 14px; height: 20px; margin-right: 20px; }
.tw-open { width: 16px; height: 16px; margin: 0 20px 0 -2px; }
.root .tw-open { margin: 0 20px 0 0; }
.node { display: flex; align-items: center; height: 40px; padding-left: 6px; background: #f1f1f1; white-space: nowrap; }
.root .node { width: 296px; }
.w284 { width: 284px; } .w228 { width: 228px; } .w198 { width: 198px; } .w206 { width: 206px; }
.w238 { width: 238px; } .w222 { width: 222px; } .w230 { width: 230px; }
.node span { padding: 0 0 2px 28px; }
.node .wide { letter-spacing: 1px; }
.eye { width: 32px; height: 20px; }
.eyeoff, .folder { width: 32px; height: 26px; }
.gear { width: 32px; height: 32px; }
.eye + .folder, .eyeoff + .folder { margin-left: 18px; }
.thumb { width: 30px; height: 31px; margin: 0 1px 0 19px; }
.unsaved { display: flex; align-items: center; width: 196px; height: 32px; margin-left: 12px; padding-left: 9px; background: #999; color: #fff; }
.unsaved b { padding: 0 0 2px 30px; font-weight: 700; letter-spacing: .1px; }
.radio { width: 28px; height: 28px; margin-left: 8px; }
.navbar { position: relative; display: flex; align-items: flex-start; width: 506px; height: 48px; margin: 0 0 8px 417px; padding: 8px 0 0 7px; background: #f1f1f1; }
.navbar svg { width: 32px; height: 34px; }
.navbar .caret { width: 18px; height: 12px; margin: 10px 7px 0; }
.navbar .n-orbit { margin-right: 2px; }
.navbar .n-cam { width: 30px; height: 32px; }
.navbar .n-hand { margin-left: 21px; }
.navbar .n-zoom { margin-left: 20px; }
.navbar .n-win { margin: 0 2px 0 21px; }
.navbar .n-mon { margin-left: 15px; margin-right: -4px; }
.navbar .n-grid { width: 30px; margin-left: 2px; margin-right: -1px; }
.navbar .n-quad { width: 30px; margin-left: 1px; margin-right: -1px; }

/* Timeline */
.timeline { display: flex; height: 52px; flex: none; border-top: 2px solid #c8c8c8; background: linear-gradient(#f1f1f1, #ececec); overflow: hidden; }
.t-hist { margin-left: 47px; }
.t-gear { margin-left: auto; }
```
